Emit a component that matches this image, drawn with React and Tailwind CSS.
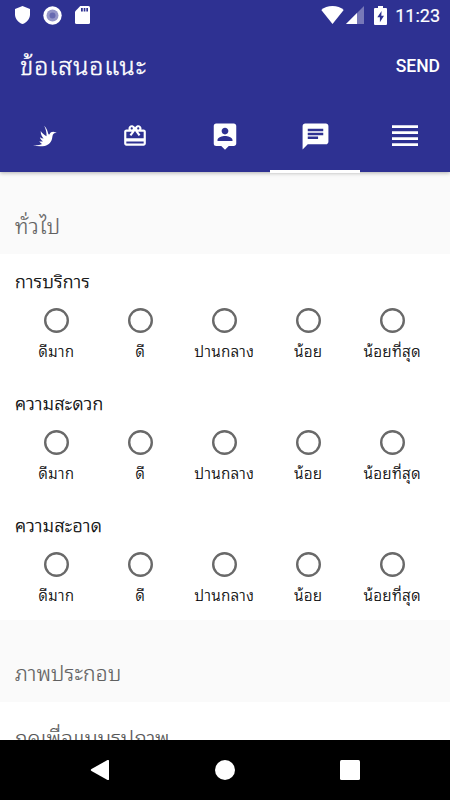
import React from 'react';

const ratings = ['ดีมาก', 'ดี', 'ปานกลาง', 'น้อย', 'น้อยที่สุด'];
const questions = ['การบริการ', 'ความสะดวก', 'ความสะอาด'];

function StatusBar() {
  return (
    <div className="flex h-[30px] items-center justify-between pl-[15px] pr-[10px]">
      <div className="flex items-center">
        <svg className="h-[18px] w-[15px]" viewBox="0 0 15 18" fill="#fff">
          <path d="M7.5 0 15 3v5.5c0 4.300-3.200 8.200-7.500 9.500C3.200 16.700 0 12.800 0 8.500V3z" />
        </svg>
        <svg className="ml-[13px] h-[19px] w-[19px]" viewBox="0 0 19 19">
          <circle cx="9.500" cy="9.500" r="9.200" fill="#fff" />
          <circle cx="9.500" cy="9.500" r="6" fill="#9495c8" />
          <circle cx="9.500" cy="9.500" r="3" fill="#6769b1" />
        </svg>
        <svg className="ml-[13px] h-[18px] w-[15px]" viewBox="0 0 15 18">
          <path d="M5.300 0h8.200A1.500 1.500 0 0 1 15 1.500v15a1.500 1.500 0 0 1-1.500 1.500h-12A1.500 1.500 0 0 1 0 16.500V5.500z" fill="#fff" />
          <path d="M6 2h1.800v3.600H6zM8.700 2h1.700v3.600H8.700zM11.300 2H13v3.600h-1.700z" fill="#2e3192" />
        </svg>
      </div>
      <div className="flex items-center">
        <svg className="h-[18px] w-[23px]" viewBox="0 0 23 18" fill="#fff">
          <path d="M11.500 18 .3 4.100C3 1.600 7 .1 11.500.1S20 1.600 22.700 4.100z" />
        </svg>
        <svg className="ml-[2px] h-[18px] w-[18px]" viewBox="0 0 18 18">
          <path d="M18 0v18H0z" fill="#fff" opacity=".35" />
          <path d="M11 7v11H0z" fill="#fff" />
        </svg>
        <svg className="ml-[10px] h-[19px] w-[13px]" viewBox="0 0 13 19">
          <path d="M4 0h5v2h3q1 0 1 1v15q0 1-1 1H1q-1 0-1-1V3q0-1 1-1h3z" fill="#fff" />
          <path d="M7.600 5 3.300 11.200h2.600v5L10 9.700H7.300z" fill="#2e3192" />
        </svg>
        <span className="mt-[1px] ml-[8px] text-[18px] leading-none [-webkit-text-stroke:0.2px_white]">11:23</span>
      </div>
    </div>
  );
}

function Tabs() {
  return (
    <nav className="grid h-[72px] grid-cols-5">
      <div className="flex items-center justify-center">
        <svg className="h-[22px] w-[24px]" viewBox="0 0 24 22" fill="#fff">
          <path d="M11.200.8c1.900 1.700 3.200 4.400 3.900 7.400.3 1 .8 1.600 1.400 1 .9-1.600 2-2.400 3.700-2.400l3.600.9-2.600.5c-1.300.7-1.600 2-1.900 4-.6 4.600-3.300 7.700-7.600 8.700-4 .8-8 .4-11.500-.8 3.500.1 7 0 9-1.200-1.300-.5-2.300-1.500-2.900-2.700 1.400.4 2.600.5 3.600.1-1.500-1-2.600-2.300-3-4 1.200.8 2.500 1.300 3.700 1.200C8.900 11.500 7.600 9 7.700 6c1.600 2.400 3.600 4 5.800 5.200.3-3.600-.7-7-2.300-10.400z" />
        </svg>
      </div>
      <div className="flex items-center justify-center">
        <svg className="h-[26px] w-[26px]" viewBox="0 0 24 24" fill="#fff">
          <path d="M20 6h-2.180c.11-.31.18-.65.18-1 0-1.660-1.340-3-3-3-1.050 0-1.960.54-2.500 1.350l-.5.670-.5-.68C10.960 2.540 10.050 2 9 2 7.340 2 6 3.340 6 5c0 .35.070.69.180 1H4c-1.110 0-1.990.89-1.990 2L2 19c0 1.110.89 2 2 2h16c1.110 0 2-.89 2-2V8c0-1.110-.89-2-2-2zm-5-2c.55 0 1 .45 1 1s-.45 1-1 1-1-.45-1-1 .45-1 1-1zM9 4c.55 0 1 .45 1 1s-.45 1-1 1-1-.45-1-1 .45-1 1-1zm11 15H4v-2h16v2zm0-5H4V8h5.080L7 10.830 8.620 12 11 8.760l1-1.360 1 1.360L15.380 12 17 10.830 14.920 8H20v6z" />
        </svg>
      </div>
      <div className="flex items-center justify-center">
        <svg className="h-[30px] w-[30px]" viewBox="0 0 24 24" fill="#fff">
          <path d="M19 2H5a2 2 0 0 0-2 2v14a2 2 0 0 0 2 2h4l3 3 3-3h4c1.100 0 2-.9 2-2V4c0-1.100-.9-2-2-2zm-7 3.300c1.490 0 2.700 1.210 2.700 2.700s-1.210 2.700-2.700 2.700S9.300 9.490 9.300 8s1.210-2.700 2.700-2.700zM18 16H6v-.9c0-2 4-3.100 6-3.100s6 1.100 6 3.100v.9z" />
        </svg>
      </div>
      <div className="relative flex items-center justify-center">
        <svg className="h-[31px] w-[31px]" viewBox="0 0 24 24" fill="#fff">
          <path d="M20 2H4c-1.100 0-1.990.9-1.990 2L2 22l4-4h14c1.100 0 2-.9 2-2V4c0-1.100-.9-2-2-2zM6 9h12v2H6V9zm8 5H6v-2h8v2zm4-6H6V6h12v2z" />
        </svg>
        <span className="absolute inset-x-0 -bottom-px h-[3px] bg-white" />
      </div>
      <div className="flex items-center justify-center">
        <svg className="h-[22px] w-[26px]" viewBox="0 0 26 22" fill="#fff">
          <path d="M0 .2h26v2.900H0zM0 6.200h26v2.900H0zM0 12.200h26v2.900H0zM0 18.200h26v2.900H0z" />
        </svg>
      </div>
    </nav>
  );
}

function Radio() {
  return (
    <svg className="h-[25px] w-[25px]" viewBox="0 0 25 25" fill="none">
      <circle cx="12.500" cy="12.500" r="11.300" stroke="#696969" strokeWidth="2.400" />
    </svg>
  );
}

function Question({ title }) {
  return (
    <section className="h-[122px] pt-[14px]">
      <h3 className="pl-[15px] text-[18px] leading-[28px] font-light tracking-[0.4px] [-webkit-text-stroke:0.25px_black]">{title}</h3>
      <div className="grid grid-cols-5 pt-[12px] pr-[15.5px] pl-[14.500px]">
        {ratings.map((label) => (
          <label key={label} className="flex flex-col items-center">
            <Radio />
            <span className="mt-[7px] text-[15px] leading-[24px] font-light tracking-[0.6px] whitespace-nowrap [-webkit-text-stroke:0.2px_black]">{label}</span>
          </label>
        ))}
      </div>
    </section>
  );
}

export default function App() {
  return (
    <div className="flex h-[800px] w-[450px] flex-col overflow-hidden bg-[#fafafa] font-[Roboto,'Noto_Sans_Thai_Looped','Droid_Sans_Thai','Loma','Waree','Garuda','Laksaman','Umpush','Noto_Serif_Thai','FreeSans',sans-serif] text-black">
      <header className="relative z-10 h-[172px] shrink-0 bg-[#2e3192] text-white shadow-[0_1px_4px_rgba(0,0,0,0.3)]">
        <StatusBar />
        <div className="flex h-[70px] items-center justify-between pr-[10px] pl-[20px]">
          <h1 className="mt-[3px] text-[25px] leading-[36px] font-light tracking-[0.9px] [-webkit-text-stroke:0.4px_white]">ข้อเสนอแนะ</h1>
          <button className="mt-[3px] text-[17.500px] leading-none font-medium">SEND</button>
        </div>
        <Tabs />
      </header>
      <main className="min-h-0 flex-1 overflow-hidden">
        <h2 className="h-[82px] pt-[39px] pl-[15px] text-[21px] leading-[32px] font-light tracking-[0.6px] text-[#606060] [-webkit-text-stroke:0.15px_#606060]">ทั่วไป</h2>
        <div className="bg-white">
          {questions.map((title) => (
            <Question key={title} title={title} />
          ))}
        </div>
        <h2 className="h-[82px] pt-[38px] pl-[15px] text-[21px] leading-[32px] font-light tracking-[0.2px] text-[#606060] [-webkit-text-stroke:0.15px_#606060]">ภาพประกอบ</h2>
        <div className="h-[80px] bg-white pt-[21px] pl-[15px] text-[21px] leading-[32px] font-light text-[#555] [-webkit-text-stroke:0.15px_#555]">กดเพื่อแนบรูปภาพ</div>
      </main>
      <footer className="flex h-[60px] shrink-0 items-center justify-center gap-[105px] bg-black">
        <svg className="h-[20px] w-[20px]" viewBox="0 0 20 20" fill="#fff">
          <path d="M17.500 0q1.500-.5 1.500 1v18q0 1.500-1.500 1L1.500 11q-1.500-1 0-2z" />
        </svg>
        <span className="h-[20px] w-[20px] rounded-full bg-white" />
        <span className="h-[20px] w-[20px] rounded-[1.500px] bg-white" />
      </footer>
    </div>
  );
}
